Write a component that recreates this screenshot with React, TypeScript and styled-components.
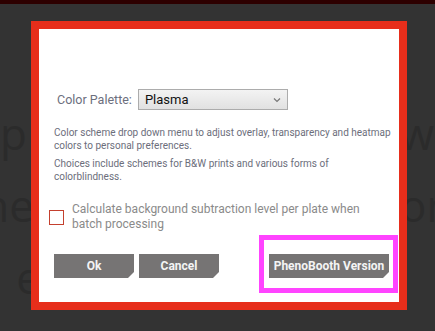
import React from 'react';
import styled, { createGlobalStyle } from 'styled-components';

const GlobalStyle = createGlobalStyle`
  html, body {
    margin: 0;
    padding: 0;
    background: #333333;
  }
  body {
    font-family: Roboto, 'Liberation Sans', sans-serif;
  }
`;

const Page = styled.div`
  position: relative;
  width: 435px;
  height: 331px;
  overflow: hidden;
  background: #333333;
`;

const TopStrip = styled.div`
  height: 4px;
  background: #2d0000;
`;

// faded page text behind the dialog
const Backdrop = styled.div`
  padding-top: 93px;
  font-family: 'Open Sans', sans-serif;
  font-size: 44px;
  line-height: 72px;
  color: #2b2b2b;
`;

const BackdropLine = styled.div<{ $leftEnd: number }>`
  display: grid;
  grid-template-columns: ${(p) => p.$leftEnd}px ${(p) => 400 - p.$leftEnd}px 1fr;
  white-space: nowrap;
`;

const LeftWord = styled.span`
  display: flex;
  justify-content: flex-end;
  overflow: hidden;
`;

const RightWord = styled.span`
  grid-column: 3;
  overflow: hidden;
`;

const Dialog = styled.div`
  position: absolute;
  left: 31px;
  top: 21px;
  width: 376px;
  height: 289px;
  box-sizing: border-box;
  border: 8px solid #e72e1b;
  background: #ffffff;
  padding: 60px 1px 0 10px;
`;

const PaletteRow = styled.div`
  display: flex;
  align-items: center;
  gap: 6px;
  padding-left: 8px;
`;

const Label = styled.span`
  font-size: 12.5px;
  color: #6c6f7d;
`;

const SelectBox = styled.div`
  display: flex;
  align-items: center;
  justify-content: space-between;
  box-sizing: border-box;
  width: 150px;
  height: 21px;
  padding: 0 6px 0 6px;
  border: 1px solid #acacac;
  background: linear-gradient(#f3f3f3, #e1e1e1);
  font-size: 13px;
  color: #111111;
`;

const Description = styled.div`
  margin-top: 16px;
  padding-left: 5px;
  width: 342px;
`;

const Para = styled.p`
  margin: 0 0 5px;
  font-size: 10px;
  line-height: 13px;
  color: #6c6e7b;
`;

const CheckRow = styled.label`
  display: flex;
  align-items: center;
  gap: 8px;
  margin-top: 19px;
`;

const CheckBox = styled.span`
  flex: none;
  width: 15px;
  height: 15px;
  box-sizing: border-box;
  border: 1px solid #c4402e;
  background: #ffffff;
`;

const CheckText = styled.span`
  width: 300px;
  font-size: 12px;
  line-height: 15px;
  color: #8a8a8a;
`;

const ButtonRow = styled.div`
  display: flex;
  align-items: flex-start;
  gap: 5px;
  margin-top: 22px;
  padding: 0 9px 0 5px;
`;

const Spacer = styled.div`
  flex: 1;
`;

const Button = styled.button<{ $width: number }>`
  width: ${(p) => p.$width}px;
  height: 24px;
  padding: 0;
  border: none;
  background: #767474;
  color: #f4f4f4;
  font-family: Roboto, 'Liberation Sans', sans-serif;
  font-size: 12px;
  font-weight: 700;
  clip-path: polygon(0 0, 100% 0, 100% calc(100% - 6px), calc(100% - 6px) 100%, 0 100%);
`;

// magenta annotation drawn round the version button
const Highlight = styled.div`
  margin: -19px -9px -15px -10px;
  padding: 14px 4px 10px 5px;
  border: 5px solid #ff44ff;
`;

function Chevron() {
  return (
    <svg width="8" height="6" viewBox="0 0 8 6">
      <path d="M1 1.5 L4 4.5 L7 1.5" fill="none" stroke="#777" strokeWidth="1.2" />
    </svg>
  );
}

export default function App() {
  return (
    <Page>
      <GlobalStyle />
      <TopStrip />
      <Backdrop>
        <BackdropLine $leftEnd={27}>
          <LeftWord>map</LeftWord>
          <RightWord>with</RightWord>
        </BackdropLine>
        <BackdropLine $leftEnd={34}>
          <LeftWord>the</LeftWord>
          <RightWord>on</RightWord>
        </BackdropLine>
        <BackdropLine $leftEnd={41}>
          <LeftWord>e</LeftWord>
        </BackdropLine>
      </Backdrop>

      <Dialog>
        <PaletteRow>
          <Label>Color Palette:</Label>
          <SelectBox>
            <span>Plasma</span>
            <Chevron />
          </SelectBox>
        </PaletteRow>

        <Description>
          <Para>
            Color scheme drop down menu to adjust overlay, transparency and heatmap colors to personal
            preferences.
          </Para>
          <Para>Choices include schemes for B&amp;W prints and various forms of colorblindness.</Para>
        </Description>

        <CheckRow>
          <CheckBox />
          <CheckText>Calculate background subtraction level per plate when batch processing</CheckText>
        </CheckRow>

        <ButtonRow>
          <Button $width={80}>Ok</Button>
          <Button $width={80}>Cancel</Button>
          <Spacer />
          <Highlight>
            <Button $width={120}>PhenoBooth Version</Button>
          </Highlight>
        </ButtonRow>
      </Dialog>
    </Page>
  );
}
